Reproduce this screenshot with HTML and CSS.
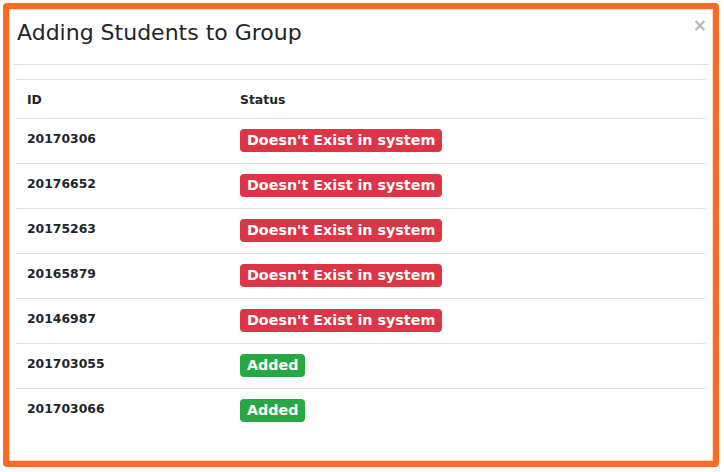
FILE: index.html
```html
<!DOCTYPE html>
<html>
<head>
<meta charset="utf-8">
<link rel="stylesheet" href="styles.css">
</head>
<body>
<div class="modal">
  <div class="modal-header">
    <h4 class="modal-title">Adding Students to Group</h4>
    <span class="close">×</span>
  </div>
  <div class="modal-body">
    <table class="table">
      <thead>
        <tr><th class="col-id">ID</th><th>Status</th></tr>
      </thead>
      <tbody>
        <tr><td>20170306</td><td><span class="badge badge-danger">Doesn't Exist in system</span></td></tr>
        <tr><td>20176652</td><td><span class="badge badge-danger">Doesn't Exist in system</span></td></tr>
        <tr><td>20175263</td><td><span class="badge badge-danger">Doesn't Exist in system</span></td></tr>
        <tr><td>20165879</td><td><span class="badge badge-danger">Doesn't Exist in system</span></td></tr>
        <tr><td>20146987</td><td><span class="badge badge-danger">Doesn't Exist in system</span></td></tr>
        <tr><td>201703055</td><td><span class="badge badge-success">Added</span></td></tr>
        <tr><td>201703066</td><td><span class="badge badge-success">Added</span></td></tr>
      </tbody>
    </table>
  </div>
</div>
</body>
</html>
```
FILE: styles.css
```css
* { box-sizing: border-box; }
html, body { margin: 0; padding: 0; background: #fff; }
body {
  font-family: "DejaVu Sans", sans-serif;
  color: #212529;
  width: 724px;
  height: 472px;
  padding: 3px 5px 5px 3px;
}
.modal {
  width: 716px;
  height: 464px;
  border: 6px solid #ff6a23;
  box-shadow: inset 0 0 0 1px #ffd9c4;
  border-radius: 4px;
  background: #fff;
  padding: 0 4px;
}
.modal-header {
  display: flex;
  justify-content: space-between;
  align-items: flex-start;
  height: 56px;
  border-bottom: 1px solid #dee2e6;
  padding: 0 0 0 4px;
}
.modal-title {
  margin: 0;
  font-weight: normal;
  font-size: 22px;
  line-height: 26px;
  margin-top: 11px;
  color: #212529;
}
.close {
  color: #b8b8b8;
  font-size: 17px;
  line-height: 17px;
  font-weight: bold;
  margin-top: 8px;
  margin-right: 2px;
}
.modal-body {
  padding: 14px 3px 0 3px;
}
.table {
  width: 100%;
  border-collapse: collapse;
}
.table th, .table td {
  text-align: left;
  vertical-align: top;
  border-top: 1px solid #dee2e6;
  font-size: 12.4px;
  font-weight: bold;
  padding: 0 11px;
}
.table th {
  height: 39px;
  vertical-align: middle;
}
.table td {
  height: 45px;
  padding-top: 11px;
  line-height: 18px;
}
.col-id { width: 213px; }
.badge {
  display: inline-block;
  font-size: 14.3px;
  line-height: 23px;
  height: 23px;
  padding: 0 7px;
  border-radius: 4px;
  color: #fff;
  margin-top: -1px;
  vertical-align: top;
}
.badge-danger { background: #dc3545; }
.badge-success { background: #28a745; }
```
